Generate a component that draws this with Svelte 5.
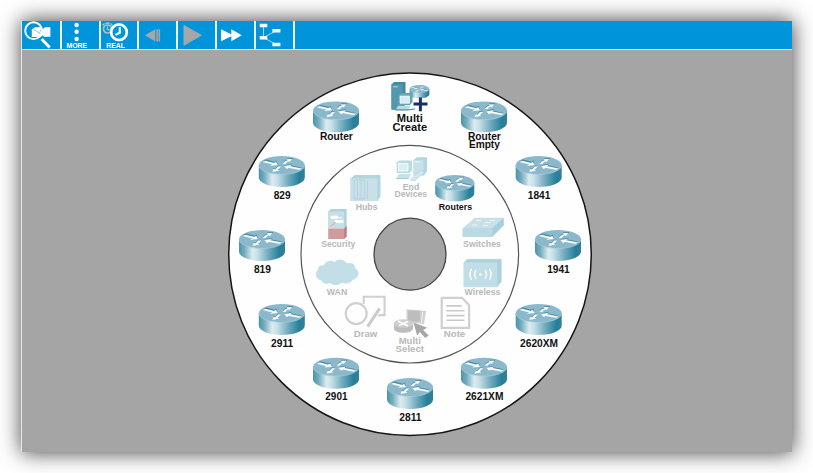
<script>
  const routers = [
    { x: 336, y: 101.3, label: ['Router'], base: 139.9, w: [32.8] },
    { x: 484, y: 101.3, label: ['Router', 'Empty'], base: 139.9, w: [32.8, 31] },
    { x: 281.8, y: 156, label: ['829'], base: 198.8, w: [17] },
    { x: 538.7, y: 156, label: ['1841'], base: 198.8, w: [22.5] },
    { x: 262, y: 230, label: ['819'], base: 272.7, w: [17] },
    { x: 558, y: 230, label: ['1941'], base: 272.7, w: [22.5] },
    { x: 281.8, y: 304, label: ['2911'], base: 346.8, w: [22.2] },
    { x: 538.7, y: 304, label: ['2620XM'], base: 346.8, w: [38] },
    { x: 336, y: 357.7, label: ['2901'], base: 400.2, w: [22.2] },
    { x: 484, y: 357.7, label: ['2621XM'], base: 400.2, w: [38] },
    { x: 410, y: 378, label: ['2811'], base: 420.8, w: [22.2] }
  ];
  const categories = [
    { text: 'End', x: 411, y: 189.7, w: 16.5 },
    { text: 'Devices', x: 410.8, y: 197, w: 32.5 },
    { text: 'Hubs', x: 366.6, y: 210, w: 21.8 },
    { text: 'Switches', x: 482, y: 247, w: 37.8 },
    { text: 'Security', x: 338.3, y: 247.3, w: 34 },
    { text: 'Wireless', x: 482.5, y: 294.7, w: 35.8 },
    { text: 'WAN', x: 337, y: 294.8, w: 20.5 },
    { text: 'Draw', x: 365.5, y: 336.8, w: 23.5 },
    { text: 'Note', x: 454.5, y: 336.8, w: 21.5 },
    { text: 'Multi', x: 409.8, y: 343.7, w: 22.2 },
    { text: 'Select', x: 409.8, y: 351.9, w: 28.4 }
  ];
</script>

{#snippet router()}
  <path d="M0 9.2V21.5C0 26.8 10.3 31 23 31S46 26.8 46 21.5V9.2Z" fill="url(#side)" />
  <ellipse cx="23" cy="9.2" rx="23" ry="9.1" fill="#8bb9cb" />
  <path d="M.2 10C1.2 15 11 18.4 23 18.4S44.8 15 45.8 10" fill="none" stroke="#afd2de" stroke-width=".6" />
  <g fill="#3f88a1" transform="translate(.1 -.8)">
    <path d="M4.5 5.6 7.5 4.4 15.5 6.5 17.5 5.3 18.8 9 11.5 9.4 13.3 8.2Z" />
    <path d="M24 7.8Q25.3 4.4 29 4L27.8 2.8 34.5 2.8 31 6.4 30.2 5.3Q28.5 5.6 27.5 7.8Z" />
    <path d="M21.8 10.6 18.7 10.5 16.4 13.5 14.4 13 14 16 20.7 14.4 19.1 13.9Z" />
    <path d="M25.6 10 33.3 8.5 31.8 10 42.5 12.4 40.5 14 29.5 11.8 28 13.2Z" />
  </g>
  <g fill="#fff" stroke="#fff" stroke-width=".25">
    <path d="M4.3 6 6.8 4.9 15.2 7 17.2 5.9 18.7 9 11.6 9.5 13.5 8.3Z" />
    <path d="M24 7.7Q25.5 4.8 29 4.2L27.9 3.2 33.2 3.1 30.8 6 29.9 5.2Q28 5.4 26.8 7.8Z" />
    <path d="M21.9 10.6 19.1 10.6 16.6 13.4 14.6 13 13.8 15.8 20.2 14.5 18.8 13.9Z" />
    <path d="M25.6 10.1 32.6 9 31.2 10.2 42.3 12.5 40.9 13.8 29.8 11.7 28.1 12.9Z" />
  </g>
{/snippet}

<div class="window">
  <nav>
    <button aria-label="Inspect">
      <svg viewBox="0 0 37 28">
        <path d="M8.8 8.2 12 6.3H18l1.5 2 2.5-2h5.4v9.4h-6l-2-1.2-1.4 1.6H8.8Z" fill="#fff" />
        <path d="M10 8l6.5 4.2L18.5 7M16.5 12.2l3 2" stroke="#83bddc" stroke-width=".8" fill="none" />
        <circle cx="10.6" cy="9.7" r="8.4" fill="none" stroke="#fff" stroke-width="1.9" />
        <path d="M18.6 18 26.7 26.6" stroke="#fff" stroke-width="2.9" />
      </svg>
    </button>
    <button>
      <svg viewBox="0 0 37 28">
        <g fill="#fff"><circle cx="14.6" cy="4" r="2.2" /><circle cx="14.6" cy="10.8" r="2.2" /><circle cx="14.6" cy="18" r="2.2" />
        <text x="14.8" y="27.1" textLength="20.8" lengthAdjust="spacingAndGlyphs">MORE</text></g>
      </svg>
    </button>
    <button>
      <svg viewBox="0 0 37 28">
        <g fill="none" stroke="#b3bdc2"><circle cx="6.5" cy="8" r="4" stroke-width="1.7" /><path d="M6.5 5.5v3l2 .5M4.5 2.3h4M1.5 4.6l2-2M9.5 2.6l2 2" stroke-width="1.4" /></g>
        <circle cx="18" cy="11.2" r="7.8" fill="#0095da" stroke="#fff" stroke-width="2.7" />
        <path d="M18.8 6v5.8l-4.3 2.1" fill="none" stroke="#fff" stroke-width="2.1" />
        <text x="14.6" y="27.1" textLength="18.6" lengthAdjust="spacingAndGlyphs" fill="#fff">REAL</text>
      </svg>
    </button>
    <button aria-label="Step back">
      <svg viewBox="0 0 37 28"><path d="M6 14.3 16.3 8.2v12.2ZM17.3 8.2h1.6v12.2h-1.6ZM19.5 8.2h1.6v12.2h-1.6Z" fill="#a5a7a9" /></svg>
    </button>
    <button aria-label="Play">
      <svg viewBox="0 0 37 28"><path d="M6 4.5 23.3 14.2 6 24.2Z" fill="#a5a7a9" stroke="#a5a7a9" stroke-linejoin="round" /></svg>
    </button>
    <button aria-label="Fast forward">
      <svg viewBox="0 0 37 28"><path d="M4 8.3 14.3 13.3V8.3L24.8 14.3 14.3 20.3V15.3L4 20.3Z" fill="#fff" /></svg>
    </button>
    <button aria-label="Topology">
      <svg viewBox="0 0 37 28"><path d="M7.5 4v12.5M7.5 16.5 20.3 9.7M7.5 16.5 20.3 23.5" stroke="#b9e1f5" stroke-width=".9" fill="none" /><path d="M3.7 2.7h7.6v3.5H3.7ZM3.7 15h7.6v3.5H3.7ZM16.4 7.9h8v3.5h-8ZM16.4 21.7h8v3.5h-8Z" fill="#fff" /></svg>
    </button>
  </nav>

  <svg class="canvas" viewBox="22 50 770 402">
    <defs>
      <linearGradient id="side">
        <stop offset="0" stop-color="#4b94aa" /><stop offset=".12" stop-color="#74acbe" /><stop offset=".29" stop-color="#dcecf0" />
        <stop offset=".4" stop-color="#c6dfe7" /><stop offset=".65" stop-color="#6ea9bc" /><stop offset=".88" stop-color="#26809b" /><stop offset="1" stop-color="#347f96" />
      </linearGradient>
    </defs>
    <circle cx="410" cy="254.2" r="181.3" fill="#fefefe" stroke="#151515" stroke-width="1.5" />
    <circle cx="409.8" cy="254.2" r="108.8" fill="#fefefe" stroke="#555" stroke-width="1.2" />
    <circle cx="410" cy="254.2" r="36" fill="#a5a5a5" stroke="#454545" stroke-width="1.3" />

    {#each routers as r}
      <g transform="translate({r.x - 23} {r.y})">{@render router()}</g>
      {#each r.label as line, i}
        <text class="name" x={r.x + .4} y={r.base + i * 8.4} textLength={r.w[i]} lengthAdjust="spacingAndGlyphs">{line}</text>
      {/each}
    {/each}

    <!-- Multi create -->
    <path d="M391.5 84.5 394 82h11.5v22l-3 5.8h-11Z" fill="#3d8ca3" />
    <path d="M391.5 84.5h11v25h-11Z" fill="#5299ae" /><path d="M393 86.8h5" stroke="#b7d8e0" />
    <g transform="translate(409.6 85) scale(.43)">{@render router()}</g>
    <path d="M398.5 94.7 401 93h11.5v9l-2.5 3h-11.5Z" fill="#65a4b6" />
    <path d="M400 96h9.5v7.3H400Z" fill="#d7edf3" stroke="#fff" stroke-width=".6" />
    <path d="M398 105.8h12.5l-2.5 4.6h-12.5Z" fill="#bcd9e1" /><path d="M395.5 109.9H408l7-1" stroke="#3b8198" fill="none" />
    <path d="M420.4 97.5v13.7M413.5 104h14" stroke="#192f66" stroke-width="3" fill="none" />
    <text class="create" x="409.8" y="121.8" textLength="26" lengthAdjust="spacingAndGlyphs">Multi</text>
    <text class="create" x="409.8" y="130.7" textLength="34.8" lengthAdjust="spacingAndGlyphs">Create</text>

    <!-- End devices -->
    <path d="M413.5 160 417 157.2h10v13.8l-3 4.6h-10.5Z" fill="#b1d6df" />
    <path d="M413.5 160h10v15.4h-10Z" fill="#c8e1e8" /><path d="M415 162h5" stroke="#eef8fa" />
    <path d="M396.7 162.5 399.5 160.5h12.5v10l-2.7 2.5h-12.6Z" fill="#b8dae3" />
    <path d="M398.5 163.5h9.5v7.5h-9.5Z" fill="#dceff4" stroke="#fff" stroke-width=".8" />
    <path d="M399 174h12.2l-2.5 4.5h-12.5Z" fill="#c6e2e9" /><path d="M396.2 178.5h12.5" stroke="#a6cbd5" />
    <path d="M410 180 415 180.8 424.5 172.2 420.5 170.2Z" fill="#d2e7ed" stroke="#a9ced8" stroke-width=".5" />

    <!-- Routers -->
    <g transform="translate(435.2 175) scale(.85)">{@render router()}</g>
    <text class="cat active" x="455.4" y="210.4" textLength="33.3" lengthAdjust="spacingAndGlyphs">Routers</text>

    <!-- Hubs -->
    <path d="M350.5 178.5 354.5 175h26v21.8l-3.2 4.3h-26.8Z" fill="#b1d6df" />
    <path d="M350.5 178.5h26.7v22.6h-26.7Z" fill="#c8e1e8" />
    <path d="M354 180h10.7v19H354ZM357.5 180v19M361 180v19M367.5 180v19" fill="none" stroke="#acd0da" stroke-width=".7" />

    <!-- Switches -->
    <path d="M462.7 228.2 474.7 217.8h29v7.5l-11.5 11.7h-29.5Z" fill="#c8e1e8" />
    <path d="m492.2 228.2 11.5-10.4v7.5L492.2 237Z" fill="#a8d0da" /><path d="M462.7 228.2h29.5v8.8h-29.5Z" fill="#bad9e2" />
    <path d="M476 220.5h5m4 2h6M472 225h5m6 .5h5m2-5h5" stroke="#eff8fa" stroke-width=".9" />

    <!-- Security -->
    <path d="M328.2 211.5 331 209h15.6v17l-2 2h-16.4Z" fill="#add1db" />
    <path d="M328.2 211.5h16v17h-16Z" fill="#c6e0e8" /><path d="M328.2 228.5h16l2.4-2.6v10.4l-2.4 2.7h-16Z" fill="#d19b9e" /><path d="m344.2 228.5 2.4-2.6v10.4l-2.4 2.7Z" fill="#bf7e83" />
    <path d="M331 216.2h6.5v2h-6.5Zm4 4.3h8v2h-8Zm3-2.7h4" stroke="#fff" fill="#fff" stroke-width="1" /><path d="m330.5 226.5 5-4.2" stroke="#dfb7af" stroke-width="1.5" />

    <!-- Wireless -->
    <path d="M464 262.5 467.5 259.3h33.7v22.2l-4 5.3H464Z" fill="#abd1db" stroke="#abd1db" stroke-width=".6" stroke-linejoin="round" />
    <rect x="463.8" y="262.3" width="33.5" height="24.8" rx="1.5" fill="#c1dde5" />
    <g fill="none" stroke="#fff" stroke-width="1.4" stroke-linecap="round"><path d="M471.5 269.3Q468.3 274.3 471.5 279.5M475.9 270.5Q473.2 274.3 475.9 278.3M485.2 270.5Q487.9 274.3 485.2 278.3M489.6 269.3Q492.8 274.3 489.6 279.5" /></g><circle cx="480.5" cy="274.4" r="1.2" fill="#fff" />

    <!-- WAN -->
    <path d="M323.8 265.8C325.5 260.8 332.5 260 334.5 262.7C337.5 258.5 344.5 259.5 346.8 263.9C352 262 355.5 265.5 354.4 268.2C359.8 270.3 359.2 278.3 352.5 279.5C350.5 283.4 344.8 283.8 342.1 282.2C338.5 285.3 332.8 285.5 330.2 282.4C326.5 284.3 322.2 283 321.6 280C315.6 279.3 315 272.5 318.3 270C317.8 267 320.7 265.2 323.8 265.8Z" fill="#c2dee6" stroke="#b6d7e0" stroke-width=".6" />

    <!-- Draw -->
    <g fill="none" stroke="#cfcfcf" stroke-width="2.1"><path d="M363.7 304v-7.2H384.6v18.3H372" /><circle cx="356.2" cy="313.6" r="10.5" /></g>
    <path d="M379.7 308 367.5 326.5" stroke="#fff" stroke-width="5" /><path d="M379.7 308.3 367.5 326.7" stroke="#cbcbcb" stroke-width="3" />

    <!-- Note -->
    <path d="M441.7 297.8h20.4l7 7.4v22.6h-27.4Z" fill="none" stroke="#d0d0d0" stroke-width="2.2" />
    <path d="M446.3 305.9h15.5M446.3 310.8h18.2M446.3 315.6h18.2M446.3 320.3h18.2" stroke="#cacaca" stroke-width="1.6" />

    <!-- Multi select -->
    <path d="M406.5 309.2 426 311l-2 13-17.5-2Z" fill="#d0d0d0" /><path d="M408 310.7h12.2v10.8H408Z" fill="#bdbdbd" /><path d="m422.5 312-1 11" stroke="#f3f3f3" />
    <path d="M394 323v5.2C394 334.4 412.7 334.4 413 328.2V323" fill="#bdbdbd" /><ellipse cx="403.4" cy="323.5" rx="9.7" ry="4.3" fill="#cfcfcf" />
    <path d="m398 321 10 5m-9-.5 9-4" stroke="#fff" stroke-width="1.5" />
    <path d="m413.5 322.5 13.7 5.2-4.1 2.2 5.6 5.6-3.6 2.6-5.2-6-2.8 3.3Z" fill="#a8a8a8" />

    {#each categories as c}
      <text class="cat" class:large={c.y > 330} x={c.x} y={c.y} textLength={c.w} lengthAdjust="spacingAndGlyphs">{c.text}</text>
    {/each}
  </svg>
</div>

<style>
  :global(body) { background: #fff; }
  :global(#app) { display: flow-root; height: 473px; overflow: hidden; }
  .window {
    width: 770px;
    height: 431px;
    margin: 21px 0 0 22px;
    display: flex;
    flex-direction: column;
    background: #a5a5a5;
    box-shadow: -1px 0 #e8e8e8, 0 0 20px 1px rgba(0, 0, 0, .72);
    font-family: "Liberation Sans", Arial, sans-serif;
  }
  nav {
    display: flex;
    height: 28px;
    padding-left: .9px;
    flex: none;
    background: #0095da;
    border-bottom: 1px solid #d3e6ef;
  }
  button {
    box-sizing: border-box;
    width: 38.85px;
    height: 28px;
    padding: 0;
    border: 0;
    border-right: 2px solid #eef8fd;
    background: none;
  }
  button svg { display: block; width: 37px; height: 28px; }
  button text { font: bold 6.8px "Liberation Sans", Arial, sans-serif; text-anchor: middle; }
  .canvas { display: block; width: 770px; height: 402px; }
  .canvas text { text-anchor: middle; font-weight: bold; }
  .name { font-size: 10.4px; fill: #111; }
  .create { font-size: 11px; fill: #111; }
  .cat { font-size: 8.7px; fill: #b8b8b8; }
  .large { font-size: 9.4px; }
  .canvas .active { fill: #111; }
</style>
